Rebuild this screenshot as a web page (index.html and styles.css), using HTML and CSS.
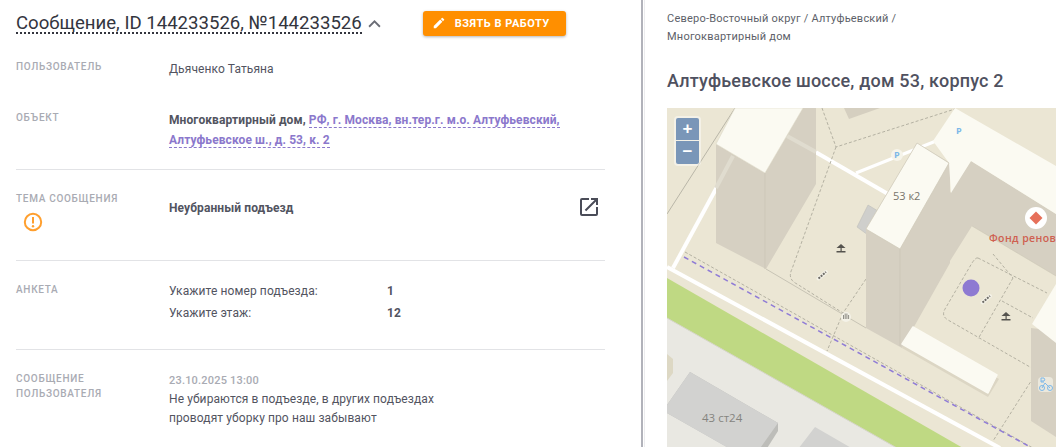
FILE: index.html
```html
<!DOCTYPE html>
<html lang="ru">
<head>
<meta charset="utf-8">
<title>Сообщение</title>
<link rel="stylesheet" href="styles.css">
</head>
<body>
<div class="page">
  <main class="left">
    <header class="head">
      <h1 class="title">Сообщение, ID 144233526, №144233526</h1>
      <svg class="chev" viewBox="0 0 12 8"><path d="M1 7L6 2l5 5" fill="none" stroke="#6b6d76" stroke-width="1.7"/></svg>
      <button class="take">
        <svg class="pen" viewBox="0 0 24 24"><path fill="#fff" d="M3 17.25V21h3.75L17.81 9.94l-3.75-3.75L3 17.25zM20.71 7.04a1 1 0 0 0 0-1.41l-2.34-2.34a1 1 0 0 0-1.41 0l-1.83 1.83 3.75 3.75 1.83-1.83z"/></svg>
        <span>ВЗЯТЬ В РАБОТУ</span>
      </button>
    </header>

    <section class="row row-user">
      <div class="label">ПОЛЬЗОВАТЕЛЬ</div>
      <div class="value">Дьяченко Татьяна</div>
    </section>

    <section class="row row-object">
      <div class="label">ОБЪЕКТ</div>
      <div class="value value-strong">Многоквартирный дом, <a class="link">РФ, г. Москва, вн.тер.г. м.о. Алтуфьевский, Алтуфьевское ш., д. 53, к. 2</a></div>
    </section>

    <section class="row row-topic">
      <div class="label">
        ТЕМА СООБЩЕНИЯ
        <svg class="warn" viewBox="0 0 20 20"><circle cx="10" cy="10" r="8.2" fill="none" stroke="#ff9f2e" stroke-width="2"/><path d="M10 5v6.400" stroke="#ff9f2e" stroke-width="2"/><circle cx="10" cy="14.200" r="1.200" fill="#ff9f2e"/></svg>
      </div>
      <div class="value value-strong">Неубранный подъезд</div>
      <svg class="open" viewBox="0 0 24 24"><path fill="#4a4c58" d="M19 19H5V5h7V3H5a2 2 0 0 0-2 2v14a2 2 0 0 0 2 2h14a2 2 0 0 0 2-2v-7h-2v7zM14 3v2h3.59l-9.83 9.83 1.41 1.41L19 6.41V10h2V3h-7z"/></svg>
    </section>

    <section class="row row-form">
      <div class="label">АНКЕТА</div>
      <div class="value">
        <div class="qa"><span class="q">Укажите номер подъезда:</span><b class="a">1</b></div>
        <div class="qa"><span class="q">Укажите этаж:</span><b class="a">12</b></div>
      </div>
    </section>

    <section class="row row-msg">
      <div class="label">СООБЩЕНИЕ<br>ПОЛЬЗОВАТЕЛЯ</div>
      <div class="value">
        <div class="date">23.10.2025 13:00</div>
        <div class="msg">Не убираются в подъезде, в других подъездах<br>проводят уборку про наш забывают</div>
      </div>
    </section>
  </main>

  <div class="divider"></div>

  <aside class="right">
    <div class="crumbs">Северо-Восточный округ / Алтуфьевский /<br>Многоквартирный дом</div>
    <h2 class="addr">Алтуфьевское шоссе, дом 53, корпус 2</h2>
    <div class="map">
      <svg class="map-svg" viewBox="667 107 389 340">
        <rect x="667" y="107" width="389" height="340" fill="#ebe6d4"/>
        <path d="M667 317L897 447H667z" fill="#e9e8e2"/>
        <path d="M667 277L963 447H897L667 317z" fill="#bfd983"/>
        <path d="M667 317L897 447" stroke="#d6d5ca" stroke-width="1" fill="none"/>
        <path d="M735 107L667 213" stroke="#b9b6a8" stroke-width="1" fill="none"/>
        <!-- white roads -->
        <path d="M667 266L1000 447" stroke="#fff" stroke-width="4" fill="none"/>
        <path d="M717 186L673 267" stroke="#fff" stroke-width="4" fill="none"/>
        <path d="M812 149L888 193" stroke="#fff" stroke-width="4" fill="none"/>
        <path d="M856 172L936 140" stroke="#fff" stroke-width="3" fill="none"/>
        <path d="M844 107H880L849 118z" fill="#d5cfc0"/>
        <!-- grey dashes -->
        <g fill="none" stroke="#b4b1a2" stroke-width="1" stroke-dasharray="3 2">
          <path d="M822 107L836 146L955 108"/>
          <path d="M836 146L792 268Q787 278 797 283L843 312L866 278"/>
          <path d="M843 312L827 350"/>
          <path d="M685 251L1056 460"/>
          <path d="M993 253L1013 277"/>
          <path d="M978 257Q976 256 972 262L945 308Q941 315 948 319L1030 366Q1038 371 1044 364"/>
          <path d="M978 257L1047 292M1013 277L978 338M1002 300L1033 317M1033 377L993 440"/>
        </g>
        <path d="M766 268L866 327" stroke="#c8c4b5" stroke-width="1" fill="none"/>
        <!-- purple route -->
        <path d="M684 256L1032 447" stroke="#8f7bd6" stroke-width="1.500" stroke-dasharray="5 4" fill="none"/>
        <!-- building A -->
        <path d="M716 143V242L766 268L816 183V107H803L765 172z" fill="#d6d0c2"/>
        <path d="M765 172V268" stroke="#cdc7b8" stroke-width="1"/>
        <path d="M716 187L733 155" stroke="#e0dccf" stroke-width="4" fill="none"/>
        <path d="M787 135L816 151" stroke="#e0dccf" stroke-width="4" fill="none"/>
        <path d="M716 143L735 107H803L765 172z" fill="#fbfaf2" stroke="#d9d4c3" stroke-width=".5"/>
        <!-- grey box -->
        <path d="M857 226L868 204L878 210L868 234z" fill="#cfcfcc" stroke="#b9b9b5" stroke-width=".5"/>
        <!-- building 53 k2 -->
        <path d="M866 228V327L902 347L950 262V162L917 142z" fill="#d6d0c2"/>
        <path d="M900 248V345" stroke="#cdc7b8" stroke-width="1"/>
        <!-- L-shaped building -->
        <path d="M971 160L950 192V260L972 225L1056 275V213z" fill="#d6d0c2"/>
        <path d="M972 225L1056 275" stroke="#c9c4b2" stroke-width=".5" fill="none"/>
        <path d="M933 140L955 107L1056 165V213L971 160L951 192L949 162z" fill="#fbfaf2"/>
        <path d="M917 142L949 162L900 248L866 228z" fill="#fbfaf2" stroke="#cfc9b7" stroke-width=".7"/>
        <!-- right building -->
        <path d="M1031 327V420L1056 436V330z" fill="#d6d0c2"/>
        <path d="M1032 323L1056 283V342z" fill="#fbfaf2"/>
        <!-- low building -->
        <path d="M902 347L988 396L999 378L913 329z" fill="#dcd6c4"/>
        <path d="M913 326L997 374L988 392L902 343z" fill="#fbfaf2" stroke="#fbfaf2" stroke-width="1.500" stroke-linejoin="round"/>
        <!-- grey buildings -->
        <path d="M667 412L757 463L778 430V422L690 371L667 404z" fill="#bdbdb9"/>
        <path d="M690 371L778 422L751 460L667 412V404z" fill="#d2d2d0"/>
        <path d="M815 426L860 452H795z" fill="#d2d2d0"/>
        <path d="M667 353L673 358V372L667 380z" fill="#ddd8c4"/>
        <!-- labels -->
        <text class="t-house" x="893" y="199">53 к2</text>
        <text class="t-house t-grey" x="702" y="421">43 ст24</text>
        <text class="t-poi" x="989" y="241">Фонд реновации</text>
        <!-- poi -->
        <circle cx="1036" cy="217" r="11" fill="#fff"/>
        <path d="M1036 210.500l6.500 6.500-6.500 6.500-6.500-6.500z" fill="#e6705a"/>
        <circle cx="897" cy="154" r="6" fill="#f6f4ea"/>
        <text class="t-p" x="894" y="157">P</text>
        <circle cx="959" cy="130" r="6" fill="#fbfaf2"/>
        <text class="t-p" x="956" y="133">P</text>
        <!-- playground icons -->
        <g fill="#55534e">
          <path d="M841 243l4.500 4h-9zM840.500 247h1.200v3h-1.200zM836.500 250h9v1.500h-9z"/>
          <path d="M1006 311l4.500 4h-9zM1005.500 315h1.200v3h-1.200zM1001.500 318h9v1.500h-9z"/>
        </g>
        <g fill="none">
          <path d="M818.500 277.500L826 271" stroke="#f4f2e8" stroke-width="4" stroke-linecap="round"/>
          <path d="M818.500 277.500L826 271" stroke="#6b6964" stroke-width="2" stroke-dasharray="2 1"/>
          <path d="M982.500 301.500L990 295" stroke="#f4f2e8" stroke-width="4" stroke-linecap="round"/>
          <path d="M982.500 301.500L990 295" stroke="#6b6964" stroke-width="2" stroke-dasharray="2 1"/>
        </g>
        <circle cx="846" cy="316" r="5" fill="#f4f2e8"/>
        <path d="M843.500 314v4M845.200 312.500v5.500M846.900 312.500v5.500M848.600 314v4" stroke="#77756e" stroke-width=".8"/>
        <!-- bike -->
        <rect x="1038" y="376" width="15" height="15" rx="4" fill="#f4f2e8" opacity=".7"/>
        <g fill="none" stroke="#7cb8ea" stroke-width="1">
          <circle cx="1042" cy="387" r="2.500"/><circle cx="1050" cy="387" r="2.500"/>
          <path d="M1042 387l3-5 5 5M1041 381h3"/>
          <path d="M1041 381v-4h3q1.500 2 0 3h-3"/>
        </g>
        <circle cx="971" cy="287" r="8.500" fill="#8e7ad2"/>
      </svg>
      <div class="zoom">
        <div class="zoom-btn">+</div>
        <div class="zoom-btn">−</div>
      </div>
    </div>
  </aside>
</div>
</body>
</html>
```

FILE: styles.css
```css
* { box-sizing: border-box; }
html, body { margin: 0; padding: 0; height: 100%; overflow: hidden; background: #fff; }
body { font-family: Roboto, "Liberation Sans", sans-serif; color: #52545f; }

.page { display: flex; width: 1056px; height: 447px; overflow: hidden; }

.left { width: 641px; flex: none; padding: 0 36px 0 16px; }

.head { display: flex; align-items: center; height: 48px; padding-bottom: 1px; }
.title {
  margin: 0;
  font-size: 18.6px;
  font-weight: 400;
  line-height: 20px;
  color: #33353e;
  border-bottom: 2px dotted #33353e;
  height: 21px;
  white-space: nowrap;
}
.chev { width: 13px; height: 9px; margin-left: 6px; }
.take {
  margin-left: 42px;
  margin-bottom: 1px;
  display: flex;
  align-items: center;
  height: 25px;
  width: 143px;
  padding: 0 0 0 9px;
  border: 0;
  border-radius: 3px;
  background: #ff8f00;
  color: #fff;
  font: 700 11px Roboto, sans-serif;
  letter-spacing: .5px;
  box-shadow: 0 1px 3px rgba(0,0,0,.3);
}
.pen { width: 14px; height: 14px; margin-right: 9px; }

.row { display: grid; grid-template-columns: 153px 1fr; position: relative; }
.label {
  font-size: 10px;
  font-weight: 500;
  letter-spacing: .7px;
  line-height: 15px;
  color: #a9abb3;
}
.value { font-size: 12px; line-height: 19px; letter-spacing: .1px; }
.value-strong { font-weight: 700; }
.link { color: #8b78cc; border-bottom: 1px dashed #8b78cc; }

.row-user { height: 51px; padding-top: 11px; }
.row-user .value { padding-top: 1px; }
.row-object { height: 71px; padding-top: 11px; border-bottom: 1px solid #e2e3e6; }
.row-object .value { line-height: 20px; max-width: 420px; }
.row-topic { height: 91px; padding-top: 21px; border-bottom: 1px solid #e2e3e6; }
.row-topic .value { padding-top: 8px; }
.warn { display: block; width: 20px; height: 20px; margin: 6px 0 0 7px; }
.open { position: absolute; top: 25px; right: 4px; width: 24px; height: 24px; }
.row-form { height: 89px; padding-top: 21px; border-bottom: 1px solid #e2e3e6; }
.qa { display: flex; height: 22px; }
.q { width: 218px; }
.a { font-weight: 700; }
.row-msg { padding-top: 21px; }
.date { color: #a9abb3; font-size: 11px; font-weight: 500; letter-spacing: .2px; line-height: 19px; }
.msg { line-height: 19px; }

.divider { width: 4px; flex: none; border-left: 2px solid #b1b2ba; border-right: 1px solid #ececee; }

.right { flex: 1; min-width: 0; padding: 10px 0 0 22px; }
.crumbs { font-size: 11px; line-height: 18px; letter-spacing: .22px; color: #5d5f69; white-space: nowrap; }
.addr { margin: 23px 0 0; font-size: 18px; line-height: 24px; font-weight: 500; letter-spacing: .2px; color: #4f5160; white-space: nowrap; }
.map { position: relative; height: 340px; margin-top: 15px; overflow: hidden; }
.map-svg { display: block; width: 389px; height: 340px; }

.zoom {
  position: absolute;
  left: 7px;
  top: 8px;
  padding: 2px;
  border-radius: 4px;
  background: rgba(255,255,255,.45);
}
.zoom-btn {
  width: 23px;
  height: 22px;
  background: #7a96b8;
  color: #fff;
  font: 700 17px/21px "Liberation Sans", sans-serif;
  text-align: center;
}
.zoom-btn:first-child { border-radius: 2px 2px 0 0; margin-bottom: 1px; }
.zoom-btn:last-child { border-radius: 0 0 2px 2px; height: 23px; }

.t-house { font: 11px "Open Sans", sans-serif; fill: #77746a; }
.t-grey { font-size: 11.500px; fill: #85847f; }
.t-poi { font: 600 10.500px "Open Sans", sans-serif; fill: #cf5f50; letter-spacing: .4px; }
.t-p { font: 700 9px "Open Sans", sans-serif; fill: #7db8e8; }
```
